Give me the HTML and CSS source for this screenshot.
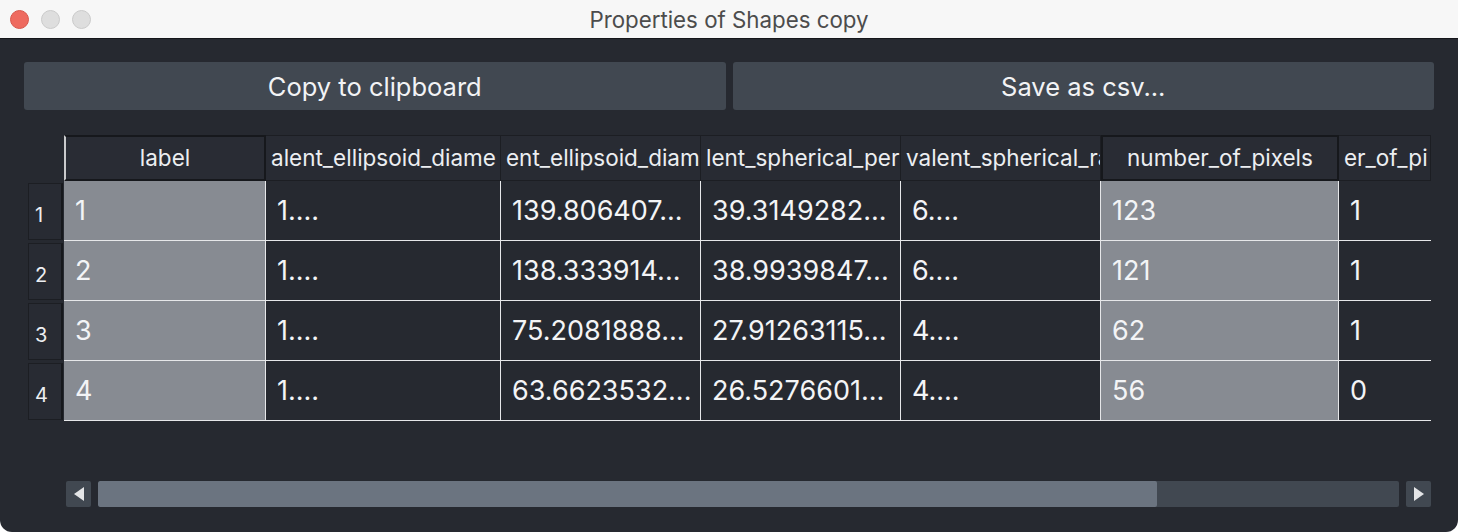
FILE: index.html
```html
<!DOCTYPE html>
<html lang="en">
<head>
  <meta charset="UTF-8">
  <title>Properties of Shapes copy</title>
  <link rel="stylesheet" href="styles.css">
</head>
<body>
  <div class="window">
    <div class="titlebar">
      <div class="lights">
        <span class="light red"></span>
        <span class="light"></span>
        <span class="light"></span>
      </div>
      <div class="title">Properties of Shapes copy</div>
    </div>

    <div class="content">
      <div class="buttons">
        <button class="btn">Copy to clipboard</button>
        <button class="btn">Save as csv...</button>
      </div>

      <div class="table">
        <div class="corner"></div>
        <div class="hcell sel first">label</div>
        <div class="hcell clip">alent_ellipsoid_diame</div>
        <div class="hcell clip">ent_ellipsoid_diam</div>
        <div class="hcell clip">lent_spherical_per</div>
        <div class="hcell clip">valent_spherical_ra</div>
        <div class="hcell sel">number_of_pixels</div>
        <div class="hcell clip">er_of_pi</div>

        <div class="rhead">1</div>
        <div class="cell sel">1</div>
        <div class="cell">1....</div>
        <div class="cell">139.806407...</div>
        <div class="cell">39.3149282...</div>
        <div class="cell">6....</div>
        <div class="cell sel">123</div>
        <div class="cell last">1</div>

        <div class="rhead">2</div>
        <div class="cell sel">2</div>
        <div class="cell">1....</div>
        <div class="cell">138.333914...</div>
        <div class="cell">38.9939847...</div>
        <div class="cell">6....</div>
        <div class="cell sel">121</div>
        <div class="cell last">1</div>

        <div class="rhead">3</div>
        <div class="cell sel">3</div>
        <div class="cell">1....</div>
        <div class="cell">75.2081888...</div>
        <div class="cell">27.91263115...</div>
        <div class="cell">4....</div>
        <div class="cell sel">62</div>
        <div class="cell last">1</div>

        <div class="rhead">4</div>
        <div class="cell sel">4</div>
        <div class="cell">1....</div>
        <div class="cell">63.6623532...</div>
        <div class="cell">26.5276601...</div>
        <div class="cell">4....</div>
        <div class="cell sel">56</div>
        <div class="cell last">0</div>
      </div>

      <div class="scrollbar">
        <div class="arrow"><span class="tri left"></span></div>
        <div class="track"><div class="thumb"></div></div>
        <div class="arrow"><span class="tri right"></span></div>
      </div>
    </div>
  </div>
</body>
</html>
```

FILE: styles.css
```css
body {
  margin: 0;
  background: #ffffff;
  font-family: "Inter", "Liberation Sans", sans-serif;
  overflow: hidden;
}

.window {
  width: 1458px;
  height: 532px;
  background: #262930;
  border-radius: 0 0 12px 12px;
  overflow: hidden;
}

.titlebar {
  height: 38px;
  background: #f7f7f7;
  border-bottom: 1px solid #15161a;
  display: flex;
  align-items: center;
  position: relative;
}

.lights {
  display: flex;
  gap: 12px;
  padding-left: 10px;
}

.light {
  width: 17px;
  height: 17px;
  border-radius: 50%;
  background: #dedede;
  border: 1px solid #cbcbcb;
}

.light.red {
  background: #ee6a5f;
  border-color: #d8574c;
}

.title {
  position: absolute;
  left: 0;
  right: 0;
  text-align: center;
  font-size: 22.3px;
  color: #4c4c4c;
}

.content {
  padding: 23px 24px 0 24px;
}

.buttons {
  display: flex;
  gap: 7px;
}

.btn {
  flex: 1;
  height: 48px;
  background: #414851;
  color: #f2f3f5;
  border: none;
  border-radius: 3px;
  font-family: "Inter", "Liberation Sans", sans-serif;
  font-size: 25.5px;
  padding: 0;
}

.table {
  margin-top: 25px;
  margin-left: 4px;
  width: 1403px;
  display: grid;
  grid-template-columns: 36px 202px 235px 200px 200px 200px 238px 92px;
  grid-template-rows: 46px 60px 60px 60px 60px;
  overflow: hidden;
}

.corner {
  background: #262930;
}

.hcell {
  background: #282b33;
  border: 1px solid #1c1e23;
  border-left: none;
  color: #eceef1;
  font-size: 22.5px;
  line-height: 44px;
  text-align: center;
  white-space: nowrap;
  overflow: hidden;
}

.hcell.clip {
  text-align: left;
  padding-left: 5px;
  text-overflow: clip;
}

.hcell.first {
  border-left: 2px solid #c9cacc;
}

.hcell.sel {
  background: #292c34;
  border: 2px solid #16181c;
  line-height: 42px;
}

.hcell.sel.first {
  border-left: 2px solid #c9cacc;
}

.rhead {
  background: #282b33;
  border: 1px solid #1c1e23;
  border-right: 2px solid #16181c;
  margin: 2px 1px 1px 0;
  color: #eceef1;
  font-size: 20px;
  display: flex;
  align-items: center;
  padding-left: 6px;
  padding-top: 6px;
}

.cell {
  border-right: 1px solid #e6e7e9;
  border-bottom: 1px solid #e6e7e9;
  color: #f3f4f6;
  font-size: 27px;
  display: flex;
  align-items: center;
  padding-left: 11px;
  white-space: nowrap;
  overflow: hidden;
}

.cell.sel {
  background: #878b92;
  align-items: flex-start;
  padding-top: 13px;
}

.cell.last {
  border-right: none;
}

.scrollbar {
  margin-top: 60px;
  margin-left: 42px;
  width: 1365px;
  height: 26px;
  display: flex;
  gap: 7px;
}

.arrow {
  width: 25px;
  background: #414851;
  border-radius: 2px;
  display: flex;
  align-items: center;
  justify-content: center;
}

.tri {
  width: 0;
  height: 0;
  border-top: 7px solid transparent;
  border-bottom: 7px solid transparent;
}

.tri.left {
  border-right: 10px solid #e4e5e7;
}

.tri.right {
  border-left: 10px solid #e4e5e7;
}

.track {
  flex: 1;
  background: #414851;
  border-radius: 2px;
  overflow: hidden;
}

.thumb {
  width: 1059px;
  height: 100%;
  background: #6b7480;
  border-radius: 2px;
}
```
